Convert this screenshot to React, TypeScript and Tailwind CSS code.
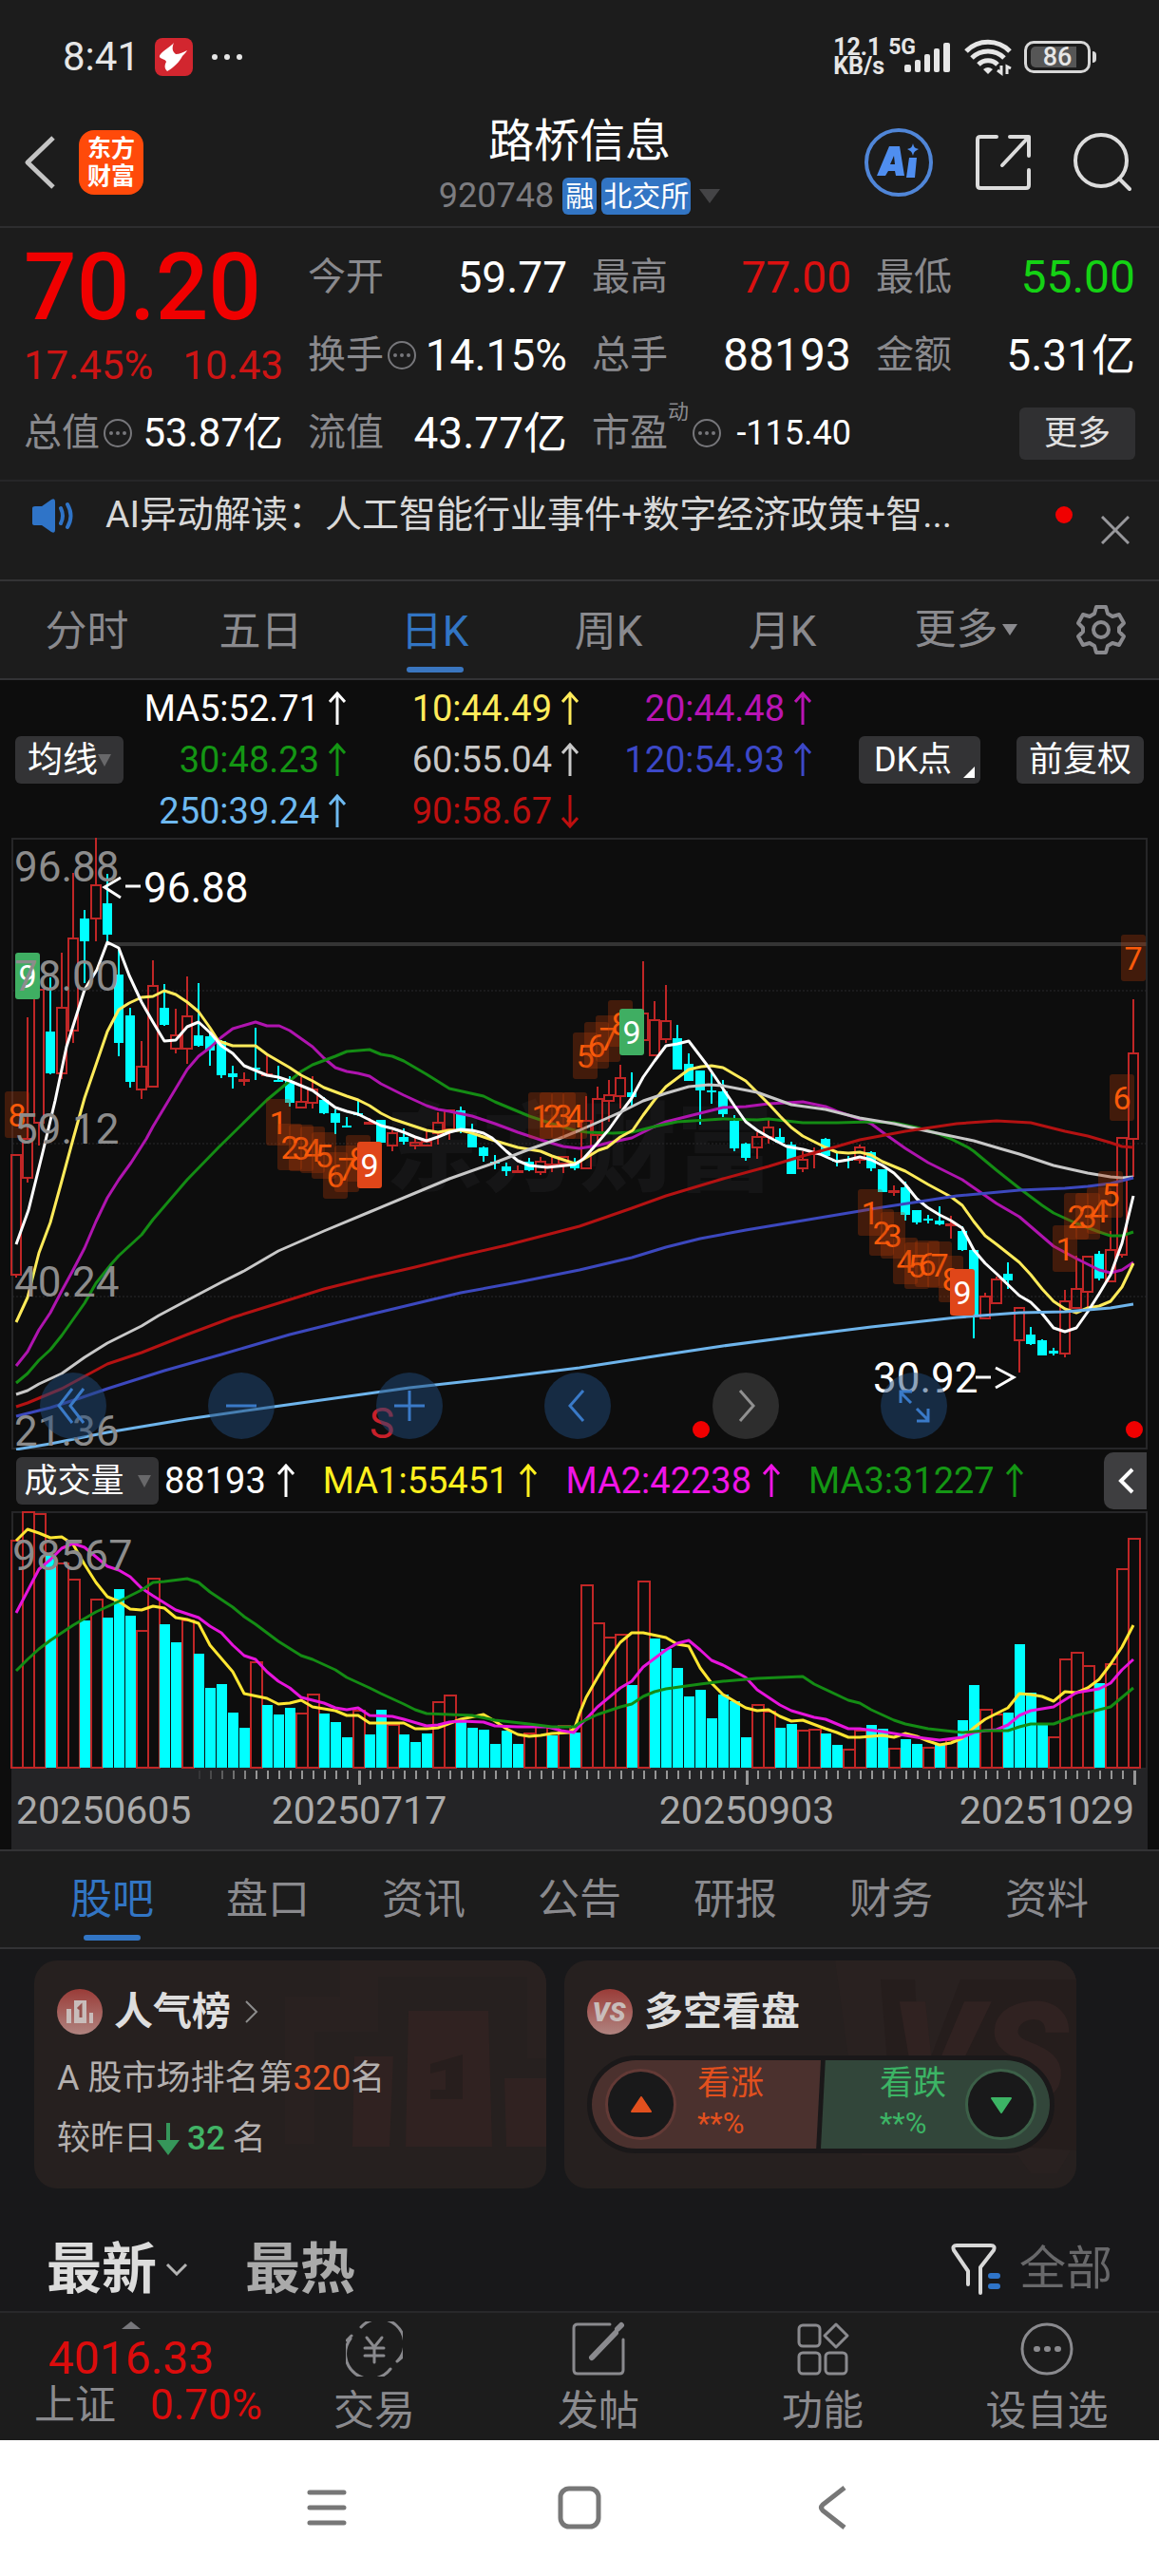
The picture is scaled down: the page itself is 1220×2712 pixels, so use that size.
import type { ReactNode } from 'react';

type Candle = [dir: 'u' | 'd', high: number, top: number, bottom: number, low: number];

const X0 = 17;
const STEP = 12;
const cx = (i: number) => X0 + i * STEP;

const RED = '#c02626';
const CYAN = '#00ffff';

// direction, high, body top, body bottom, low
const CANDLES: Candle[] = [
  ['u', 1217, 1217, 1343, 1346],
  ['u', 1072, 1200, 1241, 1246],
  ['u', 1043, 1043, 1183, 1207],
  ['d', 1030, 1087, 1131, 1132],
  ['u', 1004, 1062, 1131, 1137],
  ['u', 920, 989, 1086, 1099],
  ['d', 959, 968, 992, 1036],
  ['u', 883, 933, 968, 992],
  ['d', 921, 952, 985, 994],
  ['d', 998, 1027, 1099, 1113],
  ['d', 1062, 1070, 1140, 1146],
  ['u', 1097, 1124, 1148, 1158],
  ['u', 1012, 1039, 1145, 1146],
  ['d', 1037, 1062, 1080, 1081],
  ['u', 1063, 1091, 1105, 1110],
  ['u', 1029, 1071, 1105, 1121],
  ['d', 1036, 1091, 1102, 1103],
  ['d', 1087, 1092, 1107, 1123],
  ['d', 1096, 1097, 1133, 1136],
  ['d', 1123, 1131, 1135, 1147],
  ['u', 1130, 1138, 1139, 1144],
  ['d', 1083, 1125, 1127, 1138],
  ['u', 1112, 1132, 1133, 1134],
  ['d', 1123, 1138, 1140, 1140],
  ['d', 1134, 1139, 1162, 1166],
  ['u', 1135, 1161, 1167, 1167],
  ['u', 1134, 1148, 1162, 1168],
  ['d', 1156, 1159, 1173, 1174],
  ['d', 1169, 1173, 1183, 1195],
  ['d', 1177, 1186, 1188, 1188],
  ['d', 1159, 1173, 1175, 1176],
  ['u', 1178, 1183, 1184, 1185],
  ['d', 1180, 1180, 1204, 1204],
  ['u', 1191, 1194, 1207, 1213],
  ['d', 1189, 1198, 1203, 1206],
  ['u', 1198, 1204, 1207, 1211],
  ['u', 1192, 1203, 1207, 1207],
  ['u', 1172, 1183, 1194, 1206],
  ['u', 1169, 1170, 1190, 1201],
  ['d', 1166, 1170, 1190, 1194],
  ['d', 1184, 1195, 1209, 1209],
  ['d', 1208, 1209, 1218, 1224],
  ['d', 1217, 1224, 1226, 1232],
  ['d', 1225, 1229, 1234, 1239],
  ['u', 1228, 1234, 1235, 1236],
  ['d', 1220, 1224, 1233, 1234],
  ['u', 1219, 1224, 1235, 1238],
  ['u', 1219, 1227, 1228, 1235],
  ['u', 1218, 1219, 1226, 1236],
  ['d', 1220, 1224, 1231, 1233],
  ['u', 1155, 1181, 1231, 1231],
  ['u', 1145, 1158, 1196, 1206],
  ['u', 1138, 1154, 1160, 1182],
  ['u', 1122, 1136, 1155, 1168],
  ['d', 1130, 1151, 1156, 1167],
  ['u', 1013, 1068, 1096, 1096],
  ['u', 1055, 1075, 1112, 1112],
  ['u', 1038, 1076, 1095, 1099],
  ['d', 1080, 1094, 1127, 1127],
  ['d', 1110, 1121, 1139, 1139],
  ['d', 1128, 1128, 1149, 1185],
  ['d', 1131, 1149, 1151, 1163],
  ['d', 1138, 1150, 1174, 1177],
  ['d', 1175, 1181, 1210, 1213],
  ['d', 1204, 1205, 1220, 1223],
  ['u', 1193, 1198, 1209, 1221],
  ['u', 1180, 1188, 1198, 1205],
  ['d', 1189, 1198, 1204, 1204],
  ['d', 1203, 1206, 1237, 1237],
  ['u', 1213, 1222, 1231, 1235],
  ['u', 1209, 1214, 1216, 1231],
  ['d', 1199, 1200, 1218, 1218],
  ['d', 1215, 1222, 1224, 1229],
  ['d', 1218, 1221, 1223, 1231],
  ['u', 1206, 1209, 1222, 1226],
  ['d', 1213, 1214, 1231, 1234],
  ['d', 1232, 1232, 1256, 1256],
  ['u', 1249, 1255, 1256, 1260],
  ['d', 1245, 1251, 1280, 1286],
  ['d', 1275, 1275, 1288, 1290],
  ['d', 1280, 1284, 1286, 1289],
  ['d', 1271, 1286, 1290, 1291],
  ['u', 1281, 1290, 1291, 1305],
  ['d', 1292, 1297, 1317, 1318],
  ['d', 1317, 1317, 1387, 1410],
  ['u', 1362, 1366, 1389, 1389],
  ['u', 1345, 1348, 1373, 1373],
  ['d', 1330, 1342, 1349, 1358],
  ['u', 1378, 1378, 1412, 1446],
  ['d', 1398, 1406, 1416, 1417],
  ['d', 1411, 1412, 1428, 1428],
  ['d', 1420, 1423, 1426, 1428],
  ['u', 1359, 1371, 1426, 1430],
  ['u', 1323, 1358, 1378, 1378],
  ['u', 1324, 1324, 1361, 1380],
  ['d', 1318, 1321, 1347, 1349],
  ['u', 1297, 1317, 1350, 1350],
  ['u', 1199, 1199, 1322, 1325],
  ['u', 1053, 1110, 1200, 1240],
];

const LINES: { color: string; points: string }[] = [
  {
    color: '#af14af',
    points:
      '17,1439 29,1424 41,1401 53,1383 65,1360 77,1338 89,1315 101,1287 113,1262 125,1243 138,1225 154,1200 161,1187 173,1167 197,1127 209,1113 221,1104 233,1093 245,1084 269,1077 281,1081 294,1081 305,1086 329,1103 341,1115 353,1125 365,1129 377,1131 389,1134 401,1142 425,1154 449,1165 461,1169 473,1171 497,1176 521,1184 545,1193 569,1201 593,1208 610,1210 629,1207 641,1204 665,1199 689,1187 701,1182 725,1176 761,1167 785,1166 809,1163 845,1161 869,1166 881,1171 905,1179 917,1184 929,1193 953,1210 977,1225 1013,1243 1049,1268 1073,1282 1109,1313 1133,1326 1157,1338 1169,1341 1181,1338 1193,1330',
  },
  {
    color: '#148c14',
    points:
      '17,1457 29,1447 41,1433 53,1422 65,1407 89,1373 101,1352 117,1332 125,1323 149,1301 161,1285 197,1243 230,1209 281,1159 305,1139 317,1129 329,1122 353,1113 365,1108 389,1106 401,1111 413,1113 425,1118 449,1132 473,1147 509,1155 521,1161 557,1176 581,1184 605,1191 618,1193 645,1194 665,1193 689,1187 713,1182 761,1179 797,1180 809,1179 845,1183 881,1183 917,1182 941,1183 965,1188 989,1195 1001,1200 1019,1209 1025,1213 1049,1233 1073,1252 1097,1270 1109,1278 1133,1289 1157,1298 1169,1302 1181,1302 1193,1298',
  },
  {
    color: '#ffeb5a',
    points:
      '17,1393 29,1367 41,1320 53,1288 64,1248 77,1200 89,1157 101,1122 113,1087 125,1064 136,1057 149,1051 161,1050 173,1044 185,1048 197,1056 209,1066 221,1083 230,1097 245,1102 269,1102 281,1111 305,1125 317,1133 329,1139 341,1146 365,1155 377,1159 389,1165 401,1173 413,1179 437,1187 449,1191 461,1193 473,1191 485,1191 497,1194 509,1198 521,1202 545,1209 569,1213 581,1218 605,1226 610,1224 620,1218 630,1212 639,1209 653,1198 666,1191 677,1175 689,1159 701,1145 713,1136 725,1127 738,1124 749,1123 761,1125 773,1132 785,1139 797,1151 809,1163 821,1176 833,1188 845,1197 857,1203 869,1209 881,1214 893,1215 905,1214 917,1217 929,1224 953,1234 977,1248 1001,1261 1013,1270 1025,1287 1037,1302 1049,1311 1073,1330 1085,1343 1097,1358 1109,1371 1121,1379 1133,1383 1145,1378 1157,1376 1169,1371 1181,1356 1193,1331',
  },
  {
    color: '#ffffff',
    points:
      '17,1311 30,1275 46,1210 58,1160 70,1103 89,1043 102,1022 113,993 125,999 136,1028 149,1056 161,1077 173,1097 185,1096 197,1082 209,1077 221,1088 233,1102 245,1110 257,1123 269,1128 281,1133 293,1135 305,1139 317,1144 329,1149 341,1158 353,1167 365,1171 377,1174 389,1180 401,1186 413,1189 425,1193 437,1198 449,1202 461,1198 473,1193 485,1190 497,1191 509,1194 518,1199 533,1213 545,1223 557,1228 576,1230 595,1228 605,1227 614,1221 624,1210 641,1190 653,1173 665,1157 677,1135 689,1118 701,1102 713,1100 725,1097 744,1122 761,1147 773,1165 785,1182 797,1191 809,1198 828,1208 845,1211 863,1216 881,1224 893,1222 905,1219 917,1222 929,1228 941,1236 953,1248 965,1263 976,1272 989,1280 1001,1286 1013,1294 1025,1317 1037,1331 1049,1342 1073,1365 1085,1372 1097,1384 1109,1399 1121,1403 1133,1399 1145,1382 1157,1363 1169,1343 1181,1310 1193,1260',
  },
  {
    color: '#c8c8c8',
    points:
      '17,1469 29,1465 41,1458 65,1447 89,1430 113,1415 149,1397 167,1386 197,1370 233,1351 257,1339 293,1318 341,1297 389,1277 437,1257 473,1242 521,1225 557,1211 588,1200 610,1191 653,1172 677,1160 701,1152 725,1145 746,1143 761,1144 797,1151 833,1164 869,1169 905,1178 941,1184 977,1192 1025,1202 1052,1210 1073,1216 1109,1228 1145,1236 1169,1240 1181,1241 1193,1240',
  },
  {
    color: '#b41212',
    points:
      '17,1482 29,1478 65,1463 113,1437 149,1425 197,1406 245,1388 293,1373 341,1358 389,1346 437,1335 485,1323 533,1312 610,1292 665,1273 701,1260 761,1242 809,1229 845,1218 881,1208 905,1201 953,1192 1007,1184 1049,1181 1085,1183 1121,1192 1145,1197 1169,1204 1181,1208 1193,1209',
  },
  {
    color: '#3c48be',
    points:
      '17,1492 53,1483 84,1473 113,1463 173,1444 233,1427 305,1406 389,1385 485,1362 545,1351 610,1338 665,1325 701,1314 737,1305 785,1296 845,1286 929,1272 1007,1260 1073,1254 1121,1252 1145,1250 1169,1247 1193,1241',
  },
  {
    color: '#6eb4eb',
    points:
      '17,1527 53,1521 113,1509 197,1495 281,1483 431,1462 521,1452 610,1441 701,1427 761,1418 845,1407 917,1398 1007,1388 1073,1383 1121,1382 1169,1378 1193,1374',
  },
];

// sequence marks: digit, left, top
const MARKS: [string, number, number][] = [
  ['8', 5, 1150],
  ['1', 280, 1158],
  ['2', 292, 1184],
  ['3', 304, 1185],
  ['4', 316, 1187],
  ['5', 328, 1193],
  ['6', 340, 1214],
  ['7', 352, 1207],
  ['8', 364, 1196],
  ['1', 556, 1151],
  ['2', 568, 1151],
  ['3', 580, 1151],
  ['4', 592, 1151],
  ['5', 603, 1088],
  ['6', 615, 1077],
  ['7', 627, 1070],
  ['8', 640, 1054],
  ['1', 903, 1253],
  ['2', 915, 1274],
  ['3', 927, 1277],
  ['4', 940, 1304],
  ['5', 952, 1309],
  ['6', 963, 1307],
  ['7', 976, 1308],
  ['8', 988, 1323],
  ['1', 1108, 1291],
  ['2', 1120, 1257],
  ['3', 1132, 1257],
  ['4', 1144, 1251],
  ['5', 1156, 1234],
  ['6', 1168, 1132],
  ['7', 1180, 985],
];

const NINES: [string, number, number][] = [
  ['#3fae62', 16, 1004],
  ['#e04619', 376, 1203],
  ['#3fae62', 652, 1063],
  ['#e04619', 1000, 1337],
];

const AXIS: [string, number][] = [
  ['96.88', 929],
  ['78.00', 1044],
  ['59.12', 1205],
  ['40.24', 1366],
  ['21.36', 1523],
];

// r = outlined, c = filled; the number is the top of the bar
const VOLUME =
  'r1623 r1593 r1595 c1638 r1647 r1664 c1707 r1685 c1704 c1674 c1702 r1718 r1663 c1711 c1730 r1707 c1742 c1778 c1774 c1804 c1820 r1751 c1796 c1806 c1799 r1805 r1785 c1805 c1814 c1830 r1802 c1827 c1801 r1817 c1827 c1835 c1826 r1793 r1786 c1813 c1820 c1822 c1837 c1823 c1837 r1826 r1818 c1828 r1818 c1825 r1670 r1710 r1725 r1722 c1775 r1666 c1726 c1737 c1757 c1787 c1780 c1810 c1785 c1792 c1830 r1796 r1803 c1820 c1816 r1823 r1822 c1826 c1838 r1843 r1823 c1817 c1821 r1842 c1832 c1837 r1841 c1838 r1833 c1812 c1775 r1801 r1806 c1804 c1732 c1783 c1817 r1830 r1748 r1741 r1755 c1773 r1753 r1653 r1621'.split(
    ' ',
  );

const VOLUME_LINES: { color: string; points: string }[] = [
  {
    color: '#ffe632',
    points:
      '17,1623 29,1611 41,1615 53,1620 65,1619 77,1627 89,1648 101,1667 113,1682 125,1687 137,1695 149,1696 161,1692 173,1694 185,1704 197,1706 209,1710 221,1733 233,1747 245,1761 257,1784 281,1789 293,1795 305,1794 317,1791 329,1798 353,1802 365,1807 377,1807 389,1815 425,1815 437,1821 449,1821 461,1820 485,1811 509,1806 521,1813 533,1821 545,1827 557,1829 569,1828 581,1826 599,1825 605,1820 610,1805 617,1788 629,1767 641,1747 653,1730 665,1720 677,1720 701,1725 713,1732 725,1734 737,1757 749,1773 761,1785 785,1799 797,1802 809,1801 821,1808 833,1813 845,1812 869,1821 881,1825 893,1830 905,1830 929,1828 941,1830 953,1826 965,1829 977,1834 989,1838 1001,1836 1013,1831 1025,1820 1037,1811 1061,1799 1073,1784 1085,1785 1097,1787 1109,1792 1121,1782 1133,1783 1145,1778 1157,1769 1169,1753 1181,1735 1193,1712',
  },
  {
    color: '#e614dc',
    points:
      '17,1699 29,1676 41,1653 53,1643 65,1631 77,1626 89,1630 101,1640 113,1650 125,1654 137,1661 149,1673 161,1681 185,1696 209,1704 221,1713 233,1720 245,1733 257,1744 269,1748 281,1761 293,1771 305,1778 317,1788 341,1794 353,1799 365,1801 377,1799 389,1807 413,1808 425,1811 449,1818 461,1817 473,1814 485,1813 509,1814 521,1818 545,1819 576,1819 591,1823 604,1825 610,1818 629,1798 653,1778 665,1771 677,1756 701,1738 713,1731 725,1728 737,1738 749,1749 761,1754 785,1767 797,1780 821,1796 833,1802 857,1809 869,1811 893,1821 905,1821 929,1824 953,1828 965,1830 989,1833 1013,1830 1025,1825 1037,1823 1049,1822 1061,1817 1073,1807 1085,1802 1097,1800 1109,1798 1133,1783 1157,1779 1169,1773 1181,1759 1193,1748',
  },
  {
    color: '#148c14',
    points:
      '17,1760 29,1748 41,1737 53,1728 77,1712 101,1698 125,1687 149,1675 161,1667 173,1666 197,1663 209,1667 221,1677 245,1693 257,1703 269,1711 293,1729 317,1744 329,1748 353,1759 365,1767 389,1778 401,1784 425,1795 437,1801 449,1805 473,1806 497,1807 521,1812 557,1816 581,1819 605,1819 610,1815 629,1806 653,1798 665,1795 677,1787 689,1782 701,1779 737,1774 761,1771 797,1768 821,1767 845,1766 857,1774 893,1791 905,1794 917,1801 941,1812 953,1816 977,1821 1013,1825 1025,1824 1037,1823 1061,1823 1073,1819 1085,1816 1109,1816 1133,1807 1157,1801 1169,1798 1193,1778',
  },
];

function StatusBar() {
  return (
    <div className="flex h-[120px] items-center justify-between px-[66px] text-[#e6e6e6]">
      <div className="flex items-center">
        <span className="text-[42px] leading-none">8:41</span>
        <svg className="ml-4 size-10" viewBox="0 0 40 40">
          <rect width="40" height="40" rx="8" fill="#d2262f" />
          <path d="M20 5C17 9 4 16 5 20C6 22 11 22 12 25C10 29 10 32 13 35C20 31 26 25 29 19C31 17 33 15 34 13C30 15 26 17 22 17C18 14 18 10 20 5Z" fill="#fff" />
        </svg>
        <span className="ml-5 flex gap-[7px]">
          <i className="size-[6px] rounded-full bg-[#e6e6e6]" />
          <i className="size-[6px] rounded-full bg-[#e6e6e6]" />
          <i className="size-[6px] rounded-full bg-[#e6e6e6]" />
        </span>
      </div>
      <div className="flex h-10 items-center">
        <div className="text-[25px] font-bold leading-[20px]">
          <div>12.1</div>
          <div>KB/s</div>
        </div>
        <div className="ml-1 flex h-10 text-[23px] font-bold leading-[20px]">5G</div>
        <svg className="-ml-3 h-10 w-[50px]" viewBox="0 0 50 40" fill="#e6e6e6">
          <rect x="0" y="28" width="7" height="8" rx="2" />
          <rect x="11" y="23" width="6" height="13" rx="2" />
          <rect x="21" y="17" width="6" height="19" rx="2" />
          <rect x="31" y="11" width="6" height="25" rx="2" />
          <rect x="41" y="5" width="7" height="31" rx="2" />
        </svg>
        <svg className="ml-3 h-10 w-[52px]" viewBox="0 0 52 40" fill="none" stroke="#e6e6e6" strokeWidth="5">
          <path d="M3 14A32 32 0 0 1 49 14" />
          <path d="M9 21A24 24 0 0 1 43 21" />
          <path d="M16 28A14 14 0 0 1 36 28" />
          <path d="M21 33L26 38L31 33Q26 29 21 33Z" fill="#e6e6e6" stroke="none" />
          <path d="M40 29V37l-4 -3M46 38V30l4 2" strokeWidth="3" />
        </svg>
        <div className="ml-3 flex h-[34px] w-[70px] rounded-[10px] border-[3px] border-[#d8d8d8] py-[3px] pl-[4px] pr-[12px]">
          <span className="flex h-full w-full items-center justify-center rounded-l-[5px] bg-[#565656] pl-2 text-[27px] font-medium leading-none">86</span>
        </div>
        <i className="ml-[2px] h-[12px] w-[4px] rounded-r bg-[#d8d8d8]" />
      </div>
    </div>
  );
}

function Header() {
  return (
    <header className="grid h-[120px] grid-cols-[1fr_auto_1fr] border-b-2 border-[#2d2d2f]">
      <div className="flex items-center pb-[16px] pl-[25px]">
        <button aria-label="返回">
          <svg className="h-[56px] w-[34px]" viewBox="0 0 34 56" fill="none" stroke="#c4c4c4" strokeWidth="5" strokeLinejoin="round">
            <path d="M31 2L4 28L31 54" />
          </svg>
        </button>
        <a href="#home" className="ml-6 flex size-[68px] flex-col items-center justify-center rounded-[16px] bg-[#ff4a0a] text-[25px] font-bold leading-[29px] text-white">
          <span>东方</span>
          <span>财富</span>
        </a>
      </div>
      <div className="flex flex-col items-center">
        <h1 className="text-[48px] leading-[58px] text-white">路桥信息</h1>
        <div className="mt-[8px] flex items-center gap-[5px] text-[36px] leading-[40px] text-[#7c7c80]">
          <span className="mr-1">920748</span>
          <span className="rounded-[6px] bg-[#3275c4] px-[3px] text-[30px] leading-[39px] text-white">融</span>
          <span className="rounded-[6px] bg-[#3275c4] px-[2px] text-[30px] leading-[39px] text-white">北交所</span>
          <svg className="ml-1 h-[15px] w-[22px]" viewBox="0 0 22 15">
            <path d="M0 0H22L11 15Z" fill="#444446" />
          </svg>
        </div>
      </div>
      <div className="flex items-center justify-end gap-[43px] pb-[16px] pr-[29px]">
        <button aria-label="AI">
          <svg className="size-[74px]" viewBox="0 0 74 74" fill="#4f8ef0">
            <circle cx="37" cy="37" r="34" fill="none" stroke="#5086d8" strokeWidth="4" />
            <path fillRule="evenodd" d="M27 20H38L43 51H34L33 46H26L23 51H14ZM32 30L28 39H33Z" />
            <path d="M48 32H56L54 53H45ZM52 17C53 21 54 22 58 23C54 25 53 26 52 30C51 26 50 25 46 23C50 22 51 21 52 17Z" />
          </svg>
        </button>
        <button aria-label="分享">
          <svg className="size-[60px]" viewBox="0 0 60 60" fill="none" stroke="#dcdcdc" strokeWidth="4" strokeLinejoin="round" strokeLinecap="round">
            <path d="M23 3H6Q3 3 3 6V54Q3 57 6 57H54Q57 57 57 54V38M37 3H57V23M57 3L29 33" />
          </svg>
        </button>
        <button aria-label="搜索">
          <svg className="size-[62px]" viewBox="0 0 62 62" fill="none" stroke="#dcdcdc" strokeWidth="4" strokeLinecap="round">
            <circle cx="30" cy="29" r="27" />
            <path d="M49 48L60 59" />
          </svg>
        </button>
      </div>
    </header>
  );
}

function InfoDot() {
  return (
    <svg className="ml-[3px] size-[32px] shrink-0" viewBox="0 0 32 32" fill="#77777b">
      <circle cx="16" cy="16" r="14" fill="none" stroke="#77777b" strokeWidth="2" />
      <circle cx="9" cy="16" r="2" />
      <circle cx="16" cy="16" r="2" />
      <circle cx="23" cy="16" r="2" />
    </svg>
  );
}

function Stat({ label, value, info, sup, valueClass = 'text-[46px] text-white' }: { label: string; value: string; info?: boolean; sup?: string; valueClass?: string }) {
  return (
    <div className="flex items-center justify-between whitespace-nowrap leading-none">
      <span className="flex items-center text-[40px] text-[#8a8a8e]">
        {label}
        {sup ? <sup className="-top-[22px] text-[22px]">{sup}</sup> : null}
        {info ? <InfoDot /> : null}
      </span>
      <span className={valueClass}>{value}</span>
    </div>
  );
}

function Quote() {
  return (
    <section className="grid grid-cols-4 grid-rows-[82px_82px_82px] gap-x-[26px] border-b-2 border-[#262628] px-[25px] pb-[8px] pt-[11px]">
      <div className="row-span-2 flex flex-col whitespace-nowrap">
        <div className="text-[98px] font-medium leading-[104px] text-[#f00000]">70.20</div>
        <div className="flex justify-between text-[42px] leading-[60px] text-[#cd1414]">
          <span>17.45%</span>
          <span>10.43</span>
        </div>
      </div>
      <Stat label="今开" value="59.77" />
      <Stat label="最高" value="77.00" valueClass="text-[46px] text-[#dc1010]" />
      <Stat label="最低" value="55.00" valueClass="text-[48px] text-[#14d214]" />
      <Stat label="换手" value="14.15%" info />
      <Stat label="总手" value="88193" valueClass="text-[48px] text-white" />
      <Stat label="金额" value="5.31亿" />
      <Stat label="总值" value="53.87亿" info valueClass="text-[42px] text-white" />
      <Stat label="流值" value="43.77亿" />
      <Stat label="市盈" value="-115.40" sup="动" info valueClass="text-[36px] text-white" />
      <div className="flex items-center justify-end">
        <button className="h-[55px] rounded-[6px] bg-[#303032] px-[26px] text-[35px] leading-none text-[#e0e0e0]">更多</button>
      </div>
    </section>
  );
}

function Notice() {
  return (
    <section className="flex h-[105px] items-start border-b-2 border-[#333335] pl-[32px] pr-[31px] pt-[12px]">
      <svg className="mt-1 h-[40px] w-[48px]" viewBox="0 0 48 40">
        <path d="M2 12Q2 10 5 10H12L22 3Q26 1 26 5V35Q26 39 22 37L12 30H5Q2 30 2 28Z" fill="#2f74c8" />
        <path d="M32 12Q36 20 32 28M39 8Q46 20 39 32" fill="none" stroke="#2f74c8" strokeWidth="4" strokeLinecap="round" />
      </svg>
      <a href="#ai" className="ml-[31px] text-[39px] leading-[46px] text-[#d8d8d8]">
        AI异动解读：人工智能行业事件+数字经济政策+智...
      </a>
      <i className="ml-auto mt-[14px] size-[18px] rounded-full bg-[#f00000]" />
      <button aria-label="关闭" className="ml-[30px] mt-[24px]">
        <svg className="size-[30px]" viewBox="0 0 30 30" stroke="#98989c" strokeWidth="3">
          <path d="M1 1L29 29M29 1L1 29" />
        </svg>
      </button>
    </section>
  );
}

const PERIODS = ['分时', '五日', '日K', '周K', '月K'];

function PeriodTabs() {
  return (
    <nav className="grid h-[104px] grid-cols-[repeat(6,1fr)_122px] border-b-2 border-[#333335] text-[44px] leading-[50px] text-[#8a8a8e]">
      {PERIODS.map((p) => (
        <button key={p} className={`relative flex justify-center pt-[28px] ${p === '日K' ? 'text-[#3275c4]' : ''}`}>
          {p}
          {p === '日K' ? <i className="absolute bottom-[6px] h-[6px] w-[60px] rounded-full bg-[#3a76c0]" /> : null}
        </button>
      ))}
      <button className="flex items-center justify-center gap-1 pl-5">
        更多
        <svg className="h-[12px] w-[16px]" viewBox="0 0 16 12">
          <path d="M0 0H16L8 12Z" fill="#8a8a8e" />
        </svg>
      </button>
      <button aria-label="设置" className="flex items-center justify-center">
        <svg className="size-[54px]" viewBox="0 0 54 54" fill="none" stroke="#8a8a8e" strokeWidth="4" strokeLinejoin="round">
          <path d="M22 3H32L34 10L39 13L46 11L51 20L46 25V29L51 34L46 43L39 41L34 44L32 51H22L20 44L15 41L8 43L3 34L8 29V25L3 20L8 11L15 13L20 10Z" />
          <circle cx="27" cy="27" r="8" />
        </svg>
      </button>
    </nav>
  );
}

function Arrow({ down }: { down?: boolean }) {
  return (
    <svg className={`h-[36px] w-[18px] shrink-0 ${down ? 'rotate-180' : ''}`} viewBox="0 0 18 36" fill="none" stroke="currentColor" strokeWidth="3">
      <path d="M9 2V35M1 11L9 2L17 11" />
    </svg>
  );
}

const LEGEND: [string, string, boolean?][] = [
  ['MA5:52.71', 'text-white'],
  ['10:44.49', 'text-[#ffeb5a]'],
  ['20:44.48', 'text-[#b914b4]'],
  ['30:48.23', 'text-[#149614]'],
  ['60:55.04', 'text-[#c8c8c8]'],
  ['120:54.93', 'text-[#3c48c8]'],
  ['250:39.24', 'text-[#6eb9f0]'],
  ['90:58.67', 'text-[#be0f0f]', true],
];

function Legend() {
  return (
    <div className="flex items-center px-[16px] pb-[1px] pt-[3px] text-white">
      <button className="flex h-[50px] w-[114px] shrink-0 items-center justify-center rounded-[6px] bg-[#333335] text-[37px] leading-none">
        均线
        <svg className="h-[13px] w-[14px]" viewBox="0 0 14 13">
          <path d="M0 0H14L7 13Z" fill="#68686a" />
        </svg>
      </button>
      <ul className="grid grid-cols-[234px_245px_245px] whitespace-nowrap text-[38px] leading-[54px]">
        {LEGEND.map(([t, color, down]) => (
          <li key={t} className={`flex items-center justify-end gap-[10px] ${color}`}>
            {t}
            <Arrow down={down} />
          </li>
        ))}
      </ul>
      <button className="relative ml-auto h-[50px] w-[128px] rounded-[6px] bg-[#333335] pr-[14px] text-[36px] leading-none">
        DK点
        <svg className="absolute bottom-[6px] right-[6px] size-3" viewBox="0 0 12 12">
          <path d="M12 0V12H0Z" fill="#fff" />
        </svg>
      </button>
      <button className="ml-[38px] h-[50px] w-[134px] rounded-[6px] bg-[#333335] text-[36px] leading-none">前复权</button>
    </div>
  );
}

function CandleShape({ c, x }: { c: Candle; x: number }) {
  const [dir, high, top, bottom, low] = c;
  if (dir === 'd') {
    return (
      <g fill={CYAN}>
        <rect x={x - 1} y={high} width={2} height={low - high} />
        <rect x={x - 5} y={top} width={10} height={Math.max(bottom - top, 2)} />
      </g>
    );
  }
  return (
    <g stroke={RED} strokeWidth={2} fill="none">
      <path d={`M${x} ${high}V${top}M${x} ${bottom}V${low}`} />
      <rect x={x - 5} y={top} width={10} height={Math.max(bottom - top, 1)} />
    </g>
  );
}

function ToolButton({ label, muted, children }: { label: string; muted?: boolean; children: ReactNode }) {
  return (
    <button aria-label={label} className={`flex size-[70px] items-center justify-center rounded-full ${muted ? 'bg-[#2d2d2d] text-[#909090]' : 'bg-[#204a7a]/50 text-[#3a7ac8]'}`}>
      <svg className="size-[40px]" viewBox="0 0 40 40" fill="none" stroke="currentColor" strokeWidth="3">
        {children}
      </svg>
    </button>
  );
}

function PriceChart() {
  return (
    <div className="relative">
      <svg className="block h-auto w-full" viewBox="0 883 1220 645" role="img" aria-label="日K线">
        <rect x="13" y="884" width="1194" height="642" fill="none" stroke="#262628" strokeWidth="2" />
        <text x="406" y="1247" className="text-[102px] font-black" fill="#151516">
          东方财富
        </text>
        <g stroke="#2a2a2c" strokeDasharray="2 2">
          <path d="M13 1044H1207M13 1205H1207M13 1366H1207" />
        </g>
        <path d="M113 995H1207" stroke="#343434" strokeWidth="4" />
        {CANDLES.map((c, i) => (
          <CandleShape key={i} c={c} x={cx(i)} />
        ))}
        {LINES.map((l) => (
          <polyline key={l.color} points={l.points} fill="none" stroke={l.color} strokeWidth="3" strokeLinejoin="round" />
        ))}
        <g textAnchor="middle" className="text-[34px]">
          {MARKS.map(([digit, x, y], i) => (
            <g key={i}>
              <rect x={x} y={y} width="26" height="49" rx="3" fill="#b43c08" fillOpacity="0.32" />
              <text x={x + 13} y={y + 37} fill="#fa5a0a">
                {digit}
              </text>
            </g>
          ))}
          {NINES.map(([color, x, y]) => (
            <g key={x}>
              <rect x={x} y={y} width="26" height="49" rx="3" fill={color} />
              <text x={x + 13} y={y + 37} fill="#fff">
                9
              </text>
            </g>
          ))}
        </g>
        <g className="text-[44px]" fill="#8c8c8c">
          {AXIS.map(([t, y]) => (
            <text key={t} x="15" y={y}>
              {t}
            </text>
          ))}
        </g>
        <g className="text-[44px]" fill="#fff">
          <text x="151" y="951">
            96.88
          </text>
          <path d="M127 925L110 935L127 946M132 934H148" fill="none" stroke="#fff" strokeWidth="3" />
          <text x="919" y="1467">
            30.92
          </text>
          <path d="M1027 1451H1043M1048 1441L1067 1451L1048 1462" fill="none" stroke="#fff" strokeWidth="3" />
        </g>
        <text x="389" y="1515" className="text-[44px]" fill="#c8202a">
          S
        </text>
        <circle cx="738" cy="1506" r="9" fill="#f00000" />
        <circle cx="1194" cy="1506" r="9" fill="#f00000" />
      </svg>
      <div className="absolute bottom-[12px] left-[42px] flex gap-[107px]">
        <ToolButton label="最早">
          <path d="M19 2L5 20L19 38M31 2L17 20L31 38" />
        </ToolButton>
        <ToolButton label="缩小">
          <path d="M4 20H36" />
        </ToolButton>
        <ToolButton label="放大">
          <path d="M4 20H36M20 4V36" />
        </ToolButton>
        <ToolButton label="左移">
          <path d="M26 4L12 20L26 36" />
        </ToolButton>
        <ToolButton label="右移" muted>
          <path d="M14 4L28 20L14 36" />
        </ToolButton>
        <ToolButton label="全屏">
          <path d="M17 17L6 6M6 17V5H18M23 23L35 35M35 23V36H23" />
        </ToolButton>
      </div>
    </div>
  );
}

const VOLUME_LEGEND: [string, string][] = [
  ['88193', 'text-white'],
  ['MA1:55451', 'text-[#fff01e]'],
  ['MA2:42238', 'text-[#f014e6]'],
  ['MA3:31227', 'text-[#149614]'],
];

function VolumeHeader() {
  return (
    <div className="flex h-[64px] items-center pl-[17px] pr-[13px] text-white">
      <button className="flex h-[50px] w-[150px] items-center justify-center gap-[14px] rounded-[6px] bg-[#333335] text-[35px] leading-none">
        成交量
        <svg className="h-[13px] w-[14px]" viewBox="0 0 14 13">
          <path d="M0 0H14L7 13Z" fill="#68686a" />
        </svg>
      </button>
      <ul className="ml-[6px] flex gap-[30px] whitespace-nowrap text-[38px] leading-none">
        {VOLUME_LEGEND.map(([t, color]) => (
          <li key={t} className={`flex items-center gap-[12px] ${color}`}>
            {t}
            <Arrow />
          </li>
        ))}
      </ul>
      <button aria-label="展开" className="ml-auto flex h-[60px] w-[45px] items-center justify-center rounded-l-[10px] bg-[#3e3e40]">
        <svg className="h-[28px] w-[18px]" viewBox="0 0 18 28" fill="none" stroke="#fff" strokeWidth="4">
          <path d="M16 2L4 14L16 26" />
        </svg>
      </button>
    </div>
  );
}

const DATES: [string, number, 'start' | 'middle' | 'end'][] = [
  ['20250605', 17, 'start'],
  ['20250717', 378, 'middle'],
  ['20250903', 786, 'middle'],
  ['20251029', 1194, 'end'],
];

function VolumeChart() {
  return (
    <svg className="block h-auto w-full" viewBox="0 1592 1220 356" role="img" aria-label="成交量">
      <rect x="13" y="1593" width="1194" height="270" fill="none" stroke="#262628" strokeWidth="2" />
      <rect x="12" y="1864" width="1196" height="84" fill="#242426" />
      {VOLUME.map((v, i) => {
        const y = Number(v.slice(1));
        return v[0] === 'c' ? (
          <rect key={i} x={cx(i) - 5} y={y} width="11" height={1862 - y} fill={CYAN} />
        ) : (
          <rect key={i} x={cx(i) - 5} y={y} width="12" height={1862 - y} fill="none" stroke={RED} strokeWidth="2" />
        );
      })}
      {VOLUME_LINES.map((l) => (
        <polyline key={l.color} points={l.points} fill="none" stroke={l.color} strokeWidth="3" strokeLinejoin="round" />
      ))}
      <text x="13" y="1654" className="text-[45px]" fill="#8c8c8c">
        98567
      </text>
      {VOLUME.map((_, i) => {
        if (i < 16) return null;
        const major = i === 30 || i === 64 || i === 98;
        return <rect key={i} x={cx(i)} y="1865" width={major ? 3 : 2} height={major ? 15 : 9} fill="#969696" opacity={Math.min(1, (i - 15) / 6)} />;
      })}
      <g className="text-[41px]" fill="#aaaaaa">
        {DATES.map(([t, x, anchor]) => (
          <text key={t} x={x} y="1921" textAnchor={anchor}>
            {t}
          </text>
        ))}
      </g>
    </svg>
  );
}

const SECTIONS = ['股吧', '盘口', '资讯', '公告', '研报', '财务', '资料'];

function SectionTabs() {
  return (
    <nav className="flex h-[105px] border-y-2 border-[#333335] px-[36px] text-[44px] leading-[50px] text-[#8a8a8e]">
      {SECTIONS.map((s) => (
        <button key={s} className={`relative flex flex-1 justify-center pt-[26px] ${s === '股吧' ? 'text-[#3275c4]' : ''}`}>
          {s}
          {s === '股吧' ? <i className="absolute bottom-[7px] h-[6px] w-[60px] rounded-full bg-[#3275c4]" /> : null}
        </button>
      ))}
    </nav>
  );
}

function RankCard() {
  return (
    <article className="relative h-[240px] flex-1 overflow-hidden rounded-[24px] bg-[#26201f] px-[24px] pt-[28px]">
      <svg className="absolute right-0 top-0 h-full w-[276px]" viewBox="0 0 276 240">
        <path d="M1 193V38H59V0H276V103H256V17H99V75H32V193Z" fill="#292120" />
        <path d="M74 101H115L111 196H72ZM131 53H215L219 196H128ZM232 124H276V196H234Z" fill="#302221" />
        <path d="M154 109L188 99V146H154V136H170V115L154 119Z" fill="#271e1d" />
      </svg>
      <div className="relative">
        <h2 className="flex items-center text-[41px] font-bold leading-[52px] text-[#dedede]">
          <svg className="size-[48px]" viewBox="0 0 48 48">
            <defs>
              <linearGradient id="badge" x1="0" y1="0" x2="0" y2="1">
                <stop offset="0" stopColor="#9a3c38" />
                <stop offset="1" stopColor="#b08480" />
              </linearGradient>
            </defs>
            <circle cx="24" cy="24" r="24" fill="url(#badge)" />
            <path d="M10 21H15V36H10ZM18 12H31V36H18ZM34 25H38V36H34Z" fill="#c8bcba" />
            <path d="M22 21L25 18V30" fill="none" stroke="#94504c" strokeWidth="3" />
          </svg>
          <span className="ml-[12px]">人气榜</span>
          <svg className="ml-[14px] h-[26px] w-[16px]" viewBox="0 0 16 26" fill="none" stroke="#8c8c8c" strokeWidth="2">
            <path d="M2 2L13 13L2 24" />
          </svg>
        </h2>
        <p className="mt-[18px] text-[36px] leading-[52px] text-[#b4b0af]">
          A 股市场排名第<span className="text-[#e25022]">320</span>名
        </p>
        <p className="mt-[12px] flex items-center text-[35px] leading-[52px] text-[#b4b0af]">
          较昨日
          <svg className="mr-[8px] h-[34px] w-[24px]" viewBox="0 0 24 34" fill="#36965a">
            <path d="M10 0H14V18H24L12 34L0 18H10Z" />
          </svg>
          <span className="font-medium text-[#41b466]">32</span>
          <span className="ml-2">名</span>
        </p>
      </div>
    </article>
  );
}

function VoteCard() {
  return (
    <article className="relative h-[240px] flex-1 overflow-hidden rounded-[24px] bg-[#26201f] px-[24px] pt-[28px]">
      <svg className="absolute right-0 top-0 h-full w-[262px]" viewBox="0 0 262 240">
        <path d="M8 0H262V190L242 224H214L200 205H36Z" fill="#292120" />
        <path d="M56 20H92L98 130L140 20H262V200L200 196H70Z" fill="#251d1c" />
        <text x="66" y="150" fontSize="150" fontStyle="italic" fontWeight="900" fill="#302221">
          VS
        </text>
      </svg>
      <div className="relative">
        <h2 className="flex items-center text-[41px] font-bold leading-[52px] text-[#dedede]">
          <svg className="size-[48px]" viewBox="0 0 48 48">
            <circle cx="24" cy="24" r="24" fill="url(#badge)" />
            <text x="23" y="34" textAnchor="middle" fontSize="28" fontWeight="900" fontStyle="italic" fill="#c8bcba">
              VS
            </text>
          </svg>
          <span className="ml-[12px]">多空看盘</span>
        </h2>
        <div className="mt-[20px] flex h-[103px] w-[492px] overflow-hidden rounded-full border-[5px] border-[#1a1819] bg-[#1a1819]">
          <button className="flex flex-1 items-center bg-[#4b312e] pl-[14px] text-left text-[#e2501e] [clip-path:polygon(0_0,100%_0,98%_100%,0_100%)]">
            <span className="flex size-[75px] items-center justify-center rounded-full border-[3px] border-[#633a36] bg-[#19191a]">
              <svg className="h-[18px] w-[24px]" viewBox="0 0 24 18" fill="#e2501e">
                <path d="M12 1L22 16H2Z" stroke="#e2501e" strokeWidth="2" strokeLinejoin="round" />
              </svg>
            </span>
            <span className="ml-[22px] pb-[6px]">
              <span className="block text-[35px] leading-[46px]">看涨</span>
              <span className="block text-[31px] leading-[38px]">**%</span>
            </span>
          </button>
          <button className="flex flex-1 items-center justify-end bg-[#32463a] pr-[14px] text-left text-[#3cb465] [clip-path:polygon(2%_0,100%_0,100%_100%,0_100%)]">
            <span className="mr-[20px] pb-[6px]">
              <span className="block text-[35px] leading-[46px]">看跌</span>
              <span className="block text-[31px] leading-[38px]">**%</span>
            </span>
            <span className="flex size-[75px] items-center justify-center rounded-full border-[3px] border-[#3c6048] bg-[#19191a]">
              <svg className="h-[18px] w-[24px]" viewBox="0 0 24 18" fill="#3cb465">
                <path d="M2 2H22L12 17Z" stroke="#3cb465" strokeWidth="2" strokeLinejoin="round" />
              </svg>
            </span>
          </button>
        </div>
      </div>
    </article>
  );
}

function Feed() {
  return (
    <section className="bg-[#18181a]">
      <div className="flex gap-[19px] pl-[36px] pr-[87px] pt-[12px]">
        <RankCard />
        <VoteCard />
      </div>
      <div className="mt-[40px] flex h-[89px] items-center px-[49px]">
        <button className="flex items-center text-[58px] font-bold leading-none text-[#dcdcdc]">
          最新
          <svg className="ml-[9px] h-[14px] w-[24px]" viewBox="0 0 24 14" fill="none" stroke="#b4b4b4" strokeWidth="3">
            <path d="M2 2L12 12L22 2" />
          </svg>
        </button>
        <button className="ml-[60px] text-[58px] font-bold leading-none text-[#aaaaaa]">最热</button>
        <button className="ml-auto flex items-center text-[49px] leading-none text-[#68686a]">
          <svg className="mr-[18px] h-[56px] w-[54px]" viewBox="0 0 54 56" fill="none" strokeLinecap="round" strokeLinejoin="round">
            <path d="M18 44V30L3 8Q1 3 6 3H42Q47 3 45 8L31 26V53" stroke="#d8d8d8" strokeWidth="4" />
            <path d="M42 35H49M42 46H49" stroke="#2f74c8" strokeWidth="6" />
          </svg>
          全部
        </button>
      </div>
    </section>
  );
}

const ACTIONS: { label: string; icon: ReactNode }[] = [
  {
    label: '交易',
    icon: (
      <>
        <path d="M16 6A26 26 0 0 1 55 41M47 50A26 26 0 0 1 5 18M1 20L6 15M60 37L54 42" />
        <path d="M22 17L30 27L38 17M30 27V43M20 28H40M20 36H40" />
      </>
    ),
  },
  {
    label: '发帖',
    icon: (
      <>
        <path d="M42 3H8Q4 3 4 7V51Q4 55 8 55H52Q56 55 56 51V19" />
        <path d="M23 38L48 12M50 8L54 4" strokeWidth="6" />
      </>
    ),
  },
  {
    label: '功能',
    icon: (
      <>
        <rect x="5" y="4" width="22" height="22" rx="4" />
        <rect x="5" y="33" width="22" height="22" rx="4" />
        <rect x="33" y="33" width="22" height="22" rx="4" />
        <path d="M44 3L56 15L44 27L32 15Z" />
      </>
    ),
  },
  {
    label: '设自选',
    icon: (
      <>
        <circle cx="30" cy="29" r="26" />
        <path d="M19 29h1M30 29h1M41 29h1" strokeWidth="6" />
      </>
    ),
  },
];

function Footer() {
  return (
    <footer className="flex h-[136px] border-t-2 border-[#28282a]">
      <a href="#sh" className="flex w-[276px] shrink-0 flex-col items-center pt-[9px]">
        <svg className="h-[8px] w-[20px]" viewBox="0 0 20 8">
          <path d="M10 0L20 8H0Z" fill="#77777b" />
        </svg>
        <span className="mt-[6px] text-[48px] leading-[50px] text-[#dc0c0c]">4016.33</span>
        <span className="flex items-center gap-[36px] self-end whitespace-nowrap text-[43px] leading-[48px] text-[#8a8a8e]">
          上证
          <span className="text-[44px] text-[#dc0c0c]">0.70%</span>
        </span>
      </a>
      {ACTIONS.map((a) => (
        <button key={a.label} className="flex flex-1 flex-col items-center pt-[9px] text-[43px] leading-[56px] text-[#8a8a8e]">
          <svg className="h-[58px] w-[60px]" viewBox="0 0 60 58" fill="none" stroke="#8a8a8e" strokeWidth="3" strokeLinecap="round" strokeLinejoin="round">
            {a.icon}
          </svg>
          <span className="mt-[8px]">{a.label}</span>
        </button>
      ))}
    </footer>
  );
}

function SystemNav() {
  return (
    <nav className="flex h-[142px] items-center justify-center gap-[206px] bg-white">
      <button aria-label="最近任务">
        <svg className="size-[60px]" viewBox="0 0 60 60" stroke="#777" strokeWidth="5" strokeLinecap="round">
          <path d="M12 14H48M12 30H48M12 46H48" />
        </svg>
      </button>
      <button aria-label="主屏幕">
        <svg className="size-[60px]" viewBox="0 0 60 60">
          <rect x="10" y="10" width="40" height="40" rx="9" fill="none" stroke="#777" strokeWidth="5" />
        </svg>
      </button>
      <button aria-label="后退">
        <svg className="size-[60px]" viewBox="0 0 60 60" fill="none" stroke="#777" strokeWidth="5" strokeLinejoin="round">
          <path d="M43 9L20 27Q17 30 20 33L43 51" />
        </svg>
      </button>
    </nav>
  );
}

export default function App() {
  return (
    <div className="w-full bg-[#1c1c1c] font-['Roboto','Noto_Sans_CJK_SC',sans-serif]">
      <StatusBar />
      <Header />
      <Quote />
      <Notice />
      <PeriodTabs />
      <section className="bg-[#0d0d0d]">
        <Legend />
        <PriceChart />
        <VolumeHeader />
        <VolumeChart />
      </section>
      <SectionTabs />
      <Feed />
      <Footer />
      <SystemNav />
    </div>
  );
}
